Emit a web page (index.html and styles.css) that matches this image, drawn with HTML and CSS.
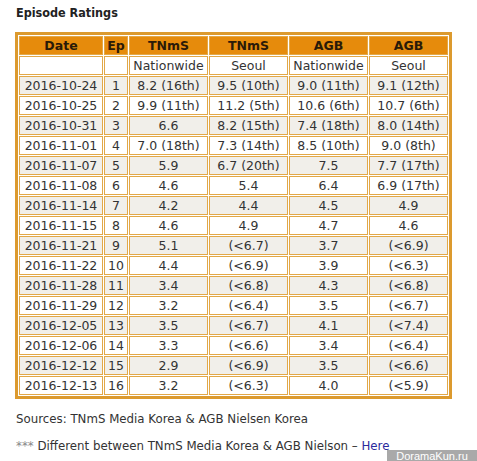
FILE: index.html
```html
<!DOCTYPE html>
<html lang="en">
<head>
    <meta charset="UTF-8">
    <title>Episode Ratings</title>
    <link rel="stylesheet" href="styles.css">
</head>
<body>
    <div class="post">
        <h4 class="post-title">Episode Ratings</h4>

        <table class="ratings">
            <thead>
                <tr class="head-main">
                    <th class="col-date">Date</th>
                    <th class="col-ep">Ep</th>
                    <th>TNmS</th>
                    <th>TNmS</th>
                    <th>AGB</th>
                    <th>AGB</th>
                </tr>
                <tr class="head-sub">
                    <td></td>
                    <td></td>
                    <td>Nationwide</td>
                    <td>Seoul</td>
                    <td>Nationwide</td>
                    <td>Seoul</td>
                </tr>
            </thead>
            <tbody>
                <tr><td>2016-10-24</td><td>1</td><td>8.2 (16th)</td><td>9.5 (10th)</td><td>9.0 (11th)</td><td>9.1 (12th)</td></tr>
                <tr><td>2016-10-25</td><td>2</td><td>9.9 (11th)</td><td>11.2 (5th)</td><td>10.6 (6th)</td><td>10.7 (6th)</td></tr>
                <tr><td>2016-10-31</td><td>3</td><td>6.6</td><td>8.2 (15th)</td><td>7.4 (18th)</td><td>8.0 (14th)</td></tr>
                <tr><td>2016-11-01</td><td>4</td><td>7.0 (18th)</td><td>7.3 (14th)</td><td>8.5 (10th)</td><td>9.0 (8th)</td></tr>
                <tr><td>2016-11-07</td><td>5</td><td>5.9</td><td>6.7 (20th)</td><td>7.5</td><td>7.7 (17th)</td></tr>
                <tr><td>2016-11-08</td><td>6</td><td>4.6</td><td>5.4</td><td>6.4</td><td>6.9 (17th)</td></tr>
                <tr><td>2016-11-14</td><td>7</td><td>4.2</td><td>4.4</td><td>4.5</td><td>4.9</td></tr>
                <tr><td>2016-11-15</td><td>8</td><td>4.6</td><td>4.9</td><td>4.7</td><td>4.6</td></tr>
                <tr><td>2016-11-21</td><td>9</td><td>5.1</td><td>(&lt;6.7)</td><td>3.7</td><td>(&lt;6.9)</td></tr>
                <tr><td>2016-11-22</td><td>10</td><td>4.4</td><td>(&lt;6.9)</td><td>3.9</td><td>(&lt;6.3)</td></tr>
                <tr><td>2016-11-28</td><td>11</td><td>3.4</td><td>(&lt;6.8)</td><td>4.3</td><td>(&lt;6.8)</td></tr>
                <tr><td>2016-11-29</td><td>12</td><td>3.2</td><td>(&lt;6.4)</td><td>3.5</td><td>(&lt;6.7)</td></tr>
                <tr><td>2016-12-05</td><td>13</td><td>3.5</td><td>(&lt;6.7)</td><td>4.1</td><td>(&lt;7.4)</td></tr>
                <tr><td>2016-12-06</td><td>14</td><td>3.3</td><td>(&lt;6.6)</td><td>3.4</td><td>(&lt;6.4)</td></tr>
                <tr><td>2016-12-12</td><td>15</td><td>2.9</td><td>(&lt;6.9)</td><td>3.5</td><td>(&lt;6.6)</td></tr>
                <tr><td>2016-12-13</td><td>16</td><td>3.2</td><td>(&lt;6.3)</td><td>4.0</td><td>(&lt;5.9)</td></tr>
            </tbody>
        </table>

        <p class="note">Sources: TNmS Media Korea &amp; AGB Nielsen Korea</p>
        <p class="note"><span class="stars">***</span> Different between TNmS Media Korea &amp; AGB Nielson – <a href="#">Here</a></p>
    </div>

    <div class="watermark">DoramaKun.ru</div>
</body>
</html>
```

FILE: styles.css
```css
* { margin: 0; padding: 0; box-sizing: border-box; }

body {
    font-family: "DejaVu Sans", Verdana, sans-serif;
    font-size: 12.5px;
    color: #333;
    background: #fff;
    width: 477px;
    height: 461px;
    overflow: hidden;
}

.post {
    padding: 5px 0 0 15px;
}

.post-title {
    font-family: "DejaVu Sans Condensed", "DejaVu Sans", sans-serif;
    font-size: 12.5px;
    font-weight: bold;
    color: #222;
    line-height: 16px;
    margin-left: 1px;
    margin-bottom: 11px;
}

.ratings {
    width: 437px;
    border: 3px solid #dc9a2e;
    border-collapse: separate;
    border-spacing: 1px;
    table-layout: fixed;
}

.ratings th,
.ratings td {
    border: 1px solid #e2a848;
    height: 19px;
    line-height: 17px;
    padding: 0;
    text-align: center;
    white-space: nowrap;
    background: #fff;
}

.ratings .col-date { width: 84px; }
.ratings .col-ep { width: 24px; }

.head-main th {
    background: #e68b0c;
    color: #2a1a08;
    font-weight: bold;
}

.ratings tbody tr:nth-child(odd) td {
    background: #f1efea;
}

.note {
    font-size: 11.8px;
    margin: 12px 0 0 1px;
    line-height: 16px;
}

.note + .note {
    margin-top: 11px;
}

.stars {
    color: #888;
}

.note a {
    color: #2a2a9c;
    text-decoration: none;
}

.watermark {
    position: absolute;
    right: 0;
    bottom: 0;
    width: 90px;
    height: 11px;
    background: rgba(140, 140, 140, 0.75);
    color: #fff;
    font-family: "Liberation Sans", Arial, sans-serif;
    font-size: 11px;
    line-height: 12px;
    text-align: center;
}
```
